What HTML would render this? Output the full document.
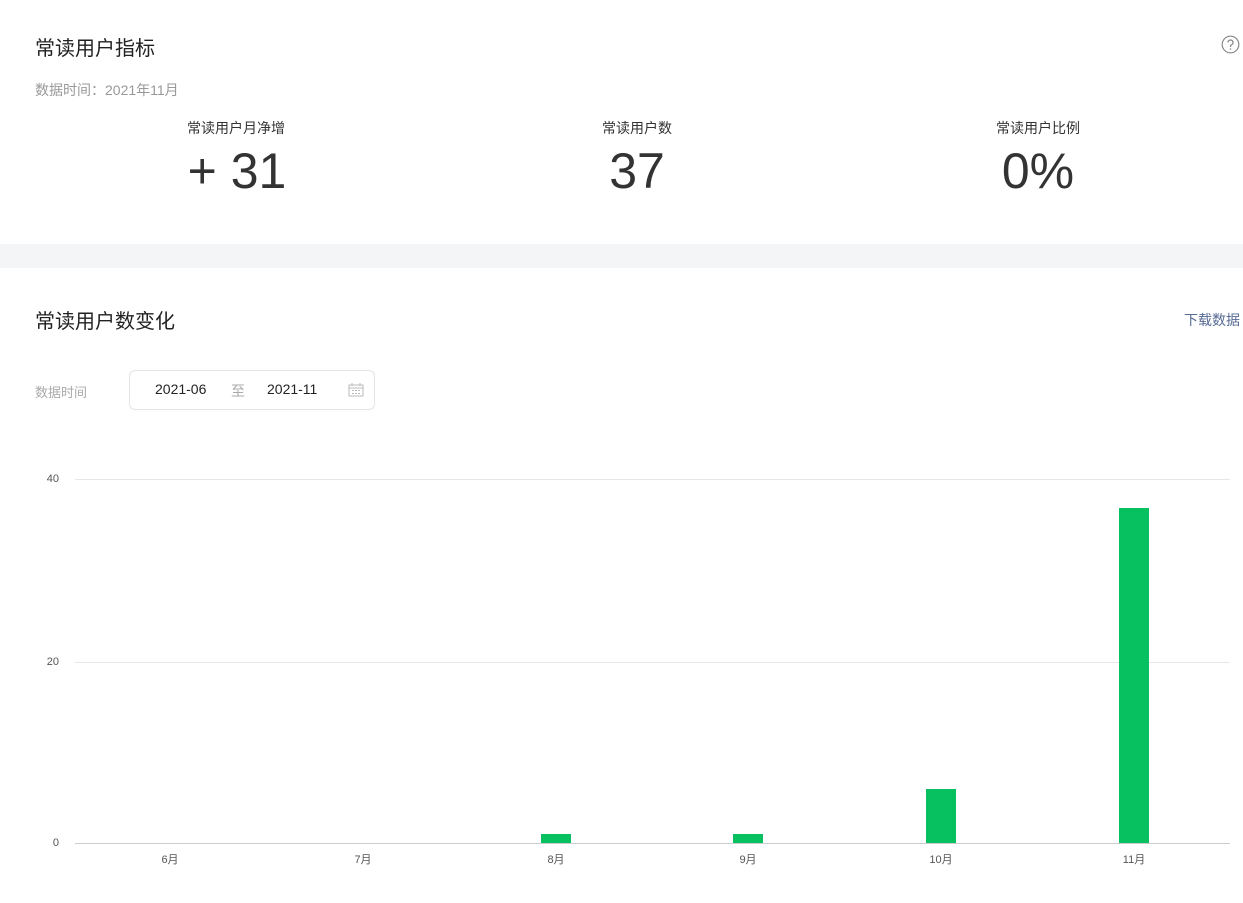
<!DOCTYPE html>
<html><head><meta charset="utf-8"><style>
*{margin:0;padding:0;box-sizing:border-box}
body{width:1243px;height:903px;background:#fff;font-family:"Liberation Sans","Noto Sans CJK SC",sans-serif;position:relative;overflow:hidden;color:#333}
.a{position:absolute;white-space:nowrap}
.h{font-size:20px;color:#222}
.lab{font-size:14px;color:#333;text-align:center;width:200px}
.num{font-size:50px;color:#333;text-align:center;width:300px;font-weight:300}
.grid{position:absolute;left:75px;width:1155px;height:1px;background:#e6e6e6}
.yl{position:absolute;font-size:11px;color:#555;right:1184px}
.xl{position:absolute;font-size:11px;color:#555;width:40px;text-align:center;top:851px}
.bar{position:absolute;width:30px;background:#07c160}
</style></head><body>
<div class="a h" style="left:35px;top:32px">常读用户指标</div>
<svg class="a" style="left:1221px;top:35px" width="19" height="19" viewBox="0 0 19 19"><circle cx="9.5" cy="9.5" r="8.3" fill="none" stroke="#888" stroke-width="1.2"/><path d="M7 7.5a2.5 2.5 0 1 1 3.5 2.3c-.7.3-1 .8-1 1.5v.7" fill="none" stroke="#888" stroke-width="1.2"/><circle cx="9.5" cy="14" r=".8" fill="#888"/></svg>
<div class="a" style="left:35px;top:80px;font-size:14px;color:#999">数据时间：2021年11月</div>
<div class="a lab" style="left:136px;top:118px">常读用户月净增</div>
<div class="a num" style="left:87px;top:142px">+ 31</div>
<div class="a lab" style="left:537px;top:118px">常读用户数</div>
<div class="a num" style="left:487px;top:142px">37</div>
<div class="a lab" style="left:938px;top:118px">常读用户比例</div>
<div class="a num" style="left:888px;top:142px">0%</div>
<div class="a" style="left:0;top:244px;width:1243px;height:24px;background:#f4f5f7"></div>
<div class="a h" style="left:35px;top:305px">常读用户数变化</div>
<div class="a" style="left:1184px;top:310px;font-size:14px;color:#576b95">下载数据</div>
<div class="a" style="left:35px;top:382px;font-size:13px;color:#aaa">数据时间</div>
<div class="a" style="left:129px;top:370px;width:246px;height:40px;border:1px solid #e4e4e4;border-radius:6px"></div>
<div class="a" style="left:155px;top:381px;font-size:14px;color:#222">2021-06</div>
<div class="a" style="left:231px;top:381px;font-size:14px;color:#aaa">至</div>
<div class="a" style="left:267px;top:381px;font-size:14px;color:#222">2021-11</div>
<svg class="a" style="left:348px;top:383px" width="16" height="14" viewBox="0 0 16 14"><rect x="1" y="2" width="14" height="11" fill="none" stroke="#bbb"/><line x1="1" y1="5" x2="15" y2="5" stroke="#bbb"/><g fill="#bbb"><rect x="4" y="7" width="2" height="1"/><rect x="7" y="7" width="2" height="1"/><rect x="10" y="7" width="2" height="1"/><rect x="4" y="10" width="2" height="1"/><rect x="7" y="10" width="2" height="1"/><rect x="10" y="10" width="2" height="1"/></g><line x1="4" y1="0" x2="4" y2="3" stroke="#bbb"/><line x1="12" y1="0" x2="12" y2="3" stroke="#bbb"/></svg>
<div class="grid" style="top:479px"></div>
<div class="grid" style="top:662px"></div>
<div class="grid" style="top:843px;background:#ccc"></div>
<div class="yl" style="top:473px">40</div>
<div class="yl" style="top:656px">20</div>
<div class="yl" style="top:837px">0</div>
<div class="bar" style="left:541px;top:834px;height:9px"></div>
<div class="bar" style="left:733px;top:834px;height:9px"></div>
<div class="bar" style="left:926px;top:789px;height:54px"></div>
<div class="bar" style="left:1119px;top:508px;height:335px"></div>
<div class="xl" style="left:150px">6月</div>
<div class="xl" style="left:343px">7月</div>
<div class="xl" style="left:536px">8月</div>
<div class="xl" style="left:728px">9月</div>
<div class="xl" style="left:921px">10月</div>
<div class="xl" style="left:1114px">11月</div>
</body></html>
